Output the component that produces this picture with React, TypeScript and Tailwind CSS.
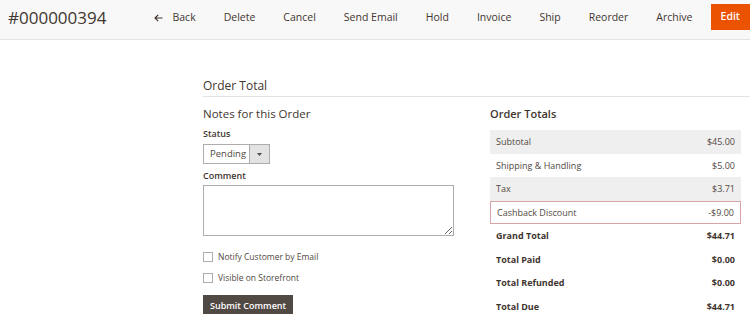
import React from 'react';

const actions = ['Delete', 'Cancel', 'Send Email', 'Hold', 'Invoice', 'Ship', 'Reorder', 'Archive'];

const totals = [
  { label: 'Subtotal', value: '$45.00', shade: true },
  { label: 'Shipping & Handling', value: '$5.00' },
  { label: 'Tax', value: '$3.71', shade: true },
  { label: 'Cashback Discount', value: '-$9.00', flagged: true },
  { label: 'Grand Total', value: '$44.71', strong: true },
  { label: 'Total Paid', value: '$0.00', strong: true },
  { label: 'Total Refunded', value: '$0.00', strong: true },
  { label: 'Total Due', value: '$44.71', strong: true },
];

const PageHeader: React.FC = () => (
  <div className="h-10 flex items-center pb-[4px] bg-[#f8f8f8] border-b border-[#e3e3e3]">
    <h1 className="pl-2 text-[17px] leading-none text-[#41362f]">#000000394</h1>
    <div className="ml-auto flex items-center self-stretch text-[10.5px] font-medium text-[#41362f]">
      <button className="flex items-center gap-[9px] px-[14px]">
        <svg width="9" height="8" viewBox="0 0 9 8" fill="none" stroke="#41362f" strokeWidth="1.2">
          <path d="M8.5 4H1M4.2 0.8 1 4l3.2 3.2" />
        </svg>
        <span>Back</span>
      </button>
      {actions.map((a) => (
        <button key={a} className="px-[14px]">{a}</button>
      ))}
      <button className="ml-1 self-start mt-1 h-[26px] px-[10px] bg-[#eb5202] text-white font-semibold">Edit</button>
    </div>
  </div>
);

const NotesForm: React.FC = () => (
  <div className="w-[251px] flex flex-col">
    <h3 className="text-[11.5px] leading-[18px] text-[#41362f]">Notes for this Order</h3>
    <label className="mt-[4px] text-[9px] leading-[14px] font-semibold text-[#41362f]">Status</label>
    <div className="mt-[3px] flex w-[67px] h-5 border border-[#adadad] bg-white">
      <span className="flex-1 pl-[6px] text-[9.5px] leading-[18px] text-[#514943]">Pending</span>
      <span className="w-5 flex items-center justify-center bg-[#e3e3e3] border-l border-[#adadad]">
        <svg width="5" height="3" viewBox="0 0 5 3"><path d="M0 0h5L2.5 3z" fill="#514943" /></svg>
      </span>
    </div>
    <label className="mt-[5px] text-[9px] leading-[14px] font-semibold text-[#41362f]">Comment</label>
    <textarea className="mt-[2px] h-[51px] w-full border border-[#adadad] resize-y bg-white" />
    <label className="mt-[14px] flex items-center gap-[5px] h-[14px] text-[8.5px] text-[#514943]">
      <span className="w-[10px] h-[10px] border border-[#adadad] bg-white" />
      Notify Customer by Email
    </label>
    <label className="mt-[7px] flex items-center gap-[5px] h-[14px] text-[8.5px] text-[#514943]">
      <span className="w-[10px] h-[10px] border border-[#adadad] bg-white" />
      Visible on Storefront
    </label>
    <button className="mt-[10px] self-start h-[21px] px-[7px] bg-[#514943] text-white text-[9px] font-semibold">
      Submit Comment
    </button>
  </div>
);

const OrderTotals: React.FC = () => (
  <div className="w-[251px] flex flex-col">
    <h3 className="text-[11px] leading-[18px] font-semibold text-[#41362f]">Order Totals</h3>
    <div className="mt-[7px] flex flex-col">
      {totals.map((t) => (
        <div
          key={t.label}
          className={`h-[23.5px] flex items-center justify-between px-[6px] text-[9px] ${
            t.shade ? 'bg-[#efefef]' : ''
          } ${t.flagged ? 'border border-[#d8a5a5] px-[5px]' : ''} ${
            t.strong ? 'font-bold text-[#41362f]' : 'text-[#514943]'
          }`}
        >
          <span>{t.label}</span>
          <span>{t.value}</span>
        </div>
      ))}
    </div>
  </div>
);

export default function App() {
  return (
    <div className="w-[750px] h-[314px] overflow-hidden bg-white" style={{ fontFamily: '"Open Sans", sans-serif' }}>
      <PageHeader />
      <div className="pl-[203px]">
        <div className="mt-[37px] pb-[1px] border-b border-[#e3e3e3]">
          <h2 className="text-[12px] leading-[18px] text-[#41362f]">Order Total</h2>
        </div>
        <div className="mt-[8px] pr-[9px] flex justify-between">
          <NotesForm />
          <OrderTotals />
        </div>
      </div>
    </div>
  );
}
